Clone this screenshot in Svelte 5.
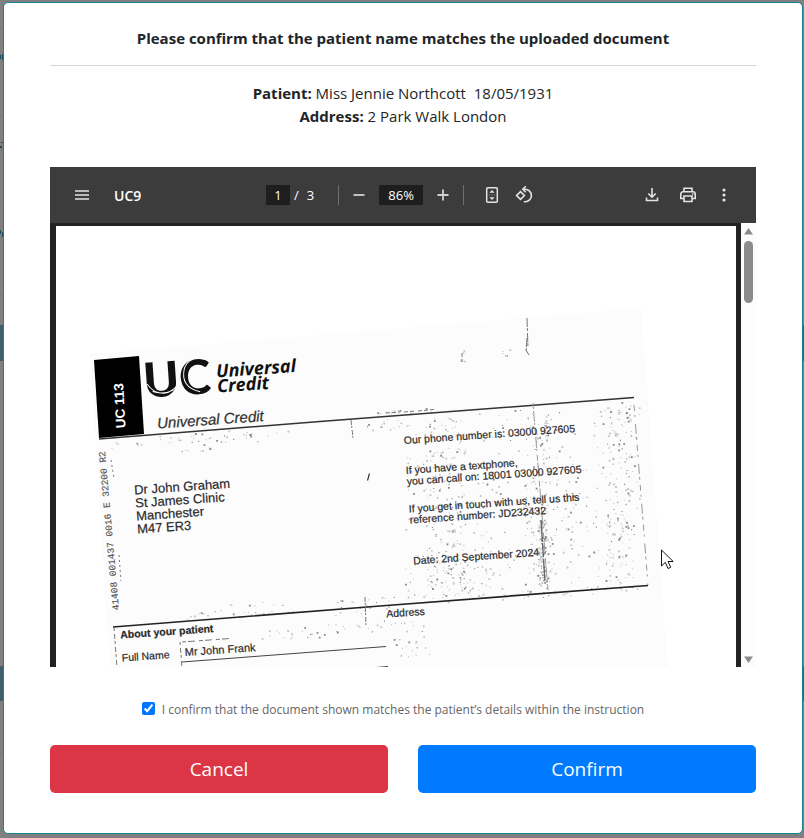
<script>
  let confirmed = $state(true);
  let page = $state('1');
  let zoom = $state('86%');

  // Letter text, in half-pixel document units
  const texts = [
    { x: 269, y: 989, s: 26, t: 'Dr John Graham' },
    { x: 271, y: 1015, s: 26, t: 'St James Clinic' },
    { x: 273, y: 1041, s: 26, t: 'Manchester' },
    { x: 275, y: 1067, s: 26, t: 'M47 ER3' },
    { x: 808, y: 888, s: 21, t: 'Our phone number is: 03000 927605' },
    { x: 812, y: 948, s: 21, t: 'If you have a textphone,' },
    { x: 814, y: 970, s: 21, t: 'you can call on: 18001 03000 927605' },
    { x: 818, y: 1025, s: 21, t: 'If you get in touch with us, tell us this' },
    { x: 820, y: 1047, s: 21, t: 'reference number: JD232432' },
    { x: 827, y: 1129, s: 21, t: 'Date: 2nd September 2024' },
    { x: 773, y: 1235, s: 21, t: 'Address' },
    { x: 241, y: 1277, s: 21, t: 'About your patient', bold: true },
    { x: 244, y: 1323, s: 21, t: 'Full Name' },
    { x: 370, y: 1312, s: 22, t: 'Mr John Frank' }
  ];

  // Repeatable scanner dust: [x, y, width, height, count], following the tilt of the sheet
  let seed = 7;
  const rnd = () => (seed = (seed * 16807) % 2147483647) / 2147483647;
  const areas = [
    [405, 418, 235, 180, 360], [425, 418, 40, 180, 130], [525, 412, 25, 190, 110],
    [605, 404, 28, 190, 120], [430, 565, 60, 38, 60], [365, 418, 40, 14, 14],
    [102, 440, 100, 9, 22], [200, 432, 90, 14, 24], [375, 411, 60, 5, 14],
    [180, 608, 120, 14, 30], [335, 600, 60, 16, 26], [255, 630, 130, 12, 34],
    [390, 622, 40, 36, 26], [500, 593, 140, 8, 26], [538, 520, 8, 68, 90],
    [460, 350, 4, 12, 5], [498, 349, 12, 8, 5], [170, 450, 40, 3, 8]
  ];
  let dust = '';
  let faint = '';
  for (const [x, y, w, h, n] of areas) {
    for (let i = 0; i < n; i++) {
      const px = x + rnd() * w;
      const py = y + rnd() * h - (px - x) * 0.075;
      const r = rnd() < 0.3 ? 1.8 : 1.1;
      const d = `M${px.toFixed(1)} ${py.toFixed(1)}h${r}v${r}h-${r}z`;
      if (i % 3 === 0) dust += d;
      else faint += d;
    }
  }
</script>

<div class="screen">
  <svg class="behind" width="3" height="260" viewBox="0 0 3 260" aria-hidden="true">
    <path d="M0 55h1v4H0zM2 54h1v6H2zM1 142h2v1H1zM0 146h2v2H0zM0 230h1v4H0zM2 232h1v5H2z" fill="#1d4a5c" />
  </svg>
  <div class="modal" role="dialog" aria-labelledby="heading">
    <h1 id="heading">Please confirm that the patient name matches the uploaded document</h1>
    <hr />
    <div class="details">
      <div><b>Patient:</b> Miss Jennie Northcott&nbsp; 18/05/1931</div>
      <div><b>Address:</b> 2 Park Walk London</div>
    </div>

    <section class="viewer" aria-label="Document viewer">
      <div class="toolbar">
        <div class="group">
          <button class="tool" aria-label="Menu">
            <svg width="16" height="16" viewBox="0 0 16 16"><path d="M1 4h14M1 8h14M1 12h14" stroke="#e4e4e4" stroke-width="1.6" /></svg>
          </button>
          <strong>UC9</strong>
        </div>
        <div class="group">
          <input class="page" aria-label="Page" bind:value={page} />
          <span class="slash">/</span><span>3</span>
          <i class="rule first"></i>
          <button class="tool" aria-label="Zoom out">
            <svg width="16" height="16" viewBox="0 0 16 16"><path d="M2.500 8h11" stroke="#d0d0d0" stroke-width="1.8" /></svg>
          </button>
          <input class="zoom" aria-label="Zoom" bind:value={zoom} />
          <button class="tool" aria-label="Zoom in">
            <svg width="16" height="16" viewBox="0 0 16 16"><path d="M2.500 8h11M8 2.500v11" stroke="#d0d0d0" stroke-width="1.8" /></svg>
          </button>
          <i class="rule second"></i>
          <button class="tool" aria-label="Fit to page">
            <svg width="18" height="18" viewBox="0 0 18 18"><rect x="3.7" y="1.7" width="10.6" height="14.6" rx="1" fill="none" stroke="#e4e4e4" stroke-width="1.5" /><path d="M9 4l2.6 2.7H6.400zM9 14l2.600-2.700H6.400z" fill="#e4e4e4" /><path d="M6 9h1M8.500 9h1M11 9h1" stroke="#999" /></svg>
          </button>
          <button class="tool" aria-label="Rotate">
            <svg width="20" height="20" viewBox="0 0 20 20" fill="none" stroke="#e4e4e4" stroke-width="1.6"><path d="M6.500 6.600L10.400 10.500 6.500 14.400 2.600 10.500z" /><path d="M9.500 4.300h1.700a6.200 6.200 0 0 1 0 12.400H9.800" /><path d="M11.800 1.300L8.800 4.300l3 3" /></svg>
          </button>
        </div>
        <div class="group end">
          <button class="tool" aria-label="Download">
            <svg width="16" height="16" viewBox="0 0 16 16" fill="none" stroke="#e4e4e4" stroke-width="1.6"><path d="M8 1v9M4.300 6.500L8 10.200l3.700-3.700M2.500 10.500v3h11v-3" /></svg>
          </button>
          <button class="tool" aria-label="Print">
            <svg width="18" height="18" viewBox="0 0 18 18" fill="none" stroke="#e4e4e4" stroke-width="1.600"><path d="M5 5.500V2.300h8v3.200M4.500 12.500H1.800V8a2.200 2.200 0 0 1 2.200-2.200h10A2.200 2.200 0 0 1 16.200 8v4.500h-2.700M5 10h8v5.500H5z" /><path d="M13 8h1.400" /></svg>
          </button>
          <button class="tool" aria-label="More actions">
            <svg width="16" height="16" viewBox="0 0 16 16" fill="#e4e4e4"><circle cx="8" cy="3" r="1.600" /><circle cx="8" cy="8" r="1.600" /><circle cx="8" cy="13" r="1.600" /></svg>
          </button>
        </div>
      </div>

      <div class="body">
        <div class="sheet">
          <svg class="scan" viewBox="112 452 1360 882" font-family="'Liberation Sans', Arial, sans-serif">
            <g transform="scale(2)">
              <path d="M90 354L641 308 668 668H110z" fill="#fcfcfc" />
              <path d={faint} fill="#c4c4c4" />
              <path d={dust} fill="#888" />
              <path d="M94 360L139 356 144 434 99 438z" fill="#000" />
              <path d="M99 439L320 421.500 634 397.500" stroke="#333" stroke-width="1.500" fill="none" />
              <path d="M113 627L380 606 648 585.500" stroke="#222" stroke-width="1.700" fill="none" />
              <path d="M182 662L386 646.500M370 668L388 666.500" stroke="#444" />
              <g fill="none" stroke="#777">
                <path d="M527 318l1 30M527 338l-1 15" stroke-dasharray="9 1 3 2" />
                <path d="M526 350l3 5M462 353v4m0 2v3" />
                <path d="M533 403L548 590" stroke-dasharray="6 2 11 1 2 4" stroke="#999" />
                <path d="M541 520l4 62" stroke="#666" stroke-width="1.400" stroke-dasharray="22 1 14 2" />
                <path d="M634 405L648 585" stroke-dasharray="6 4 2 7 10 3 3 5" stroke="#999" />
                <path d="M351 420l2 18M365 597l1 30" stroke-dasharray="5 1 2 2" />
                <path d="M114 628l3 40M180 642l2 26" stroke-dasharray="3 3 5 2" />
                <path d="M111 460l3 18M119 555l2 26" stroke-dasharray="2 3" />
                <path d="M182 642l48-3.500" stroke-dasharray="4 2 7 4" />
                <path d="M386 413l14-1M404 412l12-1M418 411l16-1.500" stroke-dasharray="4 2" />
              </g>
              <path d="M367.500 480.500l2-7" stroke="#333" stroke-width="1.200" />
            </g>
            {#each texts as t}
              <text x={t.x} y={t.y} font-size={t.s} font-weight={t.bold ? 700 : 400} fill="#2a2a2a" stroke="#2a2a2a" stroke-width=".4" transform="rotate(-4 {t.x} {t.y})">{t.t}</text>
            {/each}
            <text class="mono" x="238" y="1220" font-size="19" fill="#555" stroke="#555" stroke-width=".3" transform="rotate(-95 238 1220)">41408 001437 0016 E 32200 R2</text>
            <text x="251" y="856" font-size="27" font-weight="700" fill="#fff" transform="rotate(-93 251 856)">UC 113</text>
            <text x="315" y="857" font-size="30" font-style="italic" fill="#333" stroke="#333" stroke-width=".5" transform="rotate(-4 315 857)">Universal Credit</text>
            <g transform="rotate(-4 294 796)">
              <text class="brand" x="289" y="795" font-size="96" fill="#111">UC</text>
              <path d="M296 768q12 20 32 21q20-1 34-21M306 784q21 8 42 0M416 727q-32-10-43 14q-12 38 28 50" fill="none" stroke="#fff" stroke-width="2" />
            </g>
            <g class="slab" font-size="36" font-weight="700" font-style="italic" fill="#111">
              <text x="433" y="755" transform="rotate(-4 433 755)">Universal</text>
              <text x="435" y="785" transform="rotate(-4 435 785)">Credit</text>
            </g>
            <path transform="translate(1323 1100) scale(2)" d="M0 0v16l3.800-3.600 2.700 6.100 2.700-1.200-2.700-5.800h5.200z" fill="#fff" stroke="#111" />
          </svg>
        </div>
        <div class="scrollbar" aria-hidden="true">
          <svg width="9" height="7" viewBox="0 0 9 7"><path d="M4.500 0L9 6.500H0z" fill="#8b8b8b" /></svg>
          <i></i>
          <svg width="9" height="7" viewBox="0 0 9 7"><path d="M4.500 7L0 .5h9z" fill="#8b8b8b" /></svg>
        </div>
      </div>
    </section>

    <label class="confirm">
      <input type="checkbox" bind:checked={confirmed} />
      <span>I confirm that the document shown matches the patient’s details within the instruction</span>
    </label>

    <div class="actions">
      <button class="cancel">Cancel</button>
      <button class="ok">Confirm</button>
    </div>
  </div>
</div>

<style>
  :global(body) { margin: 0; }
  * { box-sizing: border-box; }
  .screen {
    position: relative;
    min-height: 100vh;
    padding: 2px 1px 4px 3px;
    font-family: 'Segoe UI', 'Open Sans', 'Noto Sans', sans-serif;
    font-size: 16px;
    color: #212529;
    background:
      linear-gradient(#3f5f6b, #3f5f6b) 0 325px / 100% 36px no-repeat,
      linear-gradient(#3f5f6b, #3f5f6b) 0 666px / 100% 35px no-repeat,
      linear-gradient(#777, #777) 0 27px / 100% 1px no-repeat,
      linear-gradient(#777, #777) 0 116px / 100% 1px no-repeat,
      linear-gradient(#777, #777) 0 205px / 100% 1px no-repeat,
      linear-gradient(#777, #777) 0 294px / 100% 1px no-repeat,
      linear-gradient(#777, #777) 0 753px / 100% 1px no-repeat,
      #808080;
  }
  .behind { position: absolute; left: 0; top: 0; }
  .modal {
    background: #fff;
    border: 1px solid #138496;
    border-radius: 5px;
    padding: 23px 46px 40px;
  }
  h1 { margin: 0; font-size: 15px; line-height: 24px; font-weight: 700; text-align: center; }
  hr { margin: 15px 0 16px; border: 0; border-top: 1px solid #d5d5d5; }
  .details { text-align: center; font-size: 15px; line-height: 23px; }
  .viewer { margin-top: 39px; }
  .toolbar {
    display: grid;
    grid-template-columns: 1fr auto 1fr;
    align-items: center;
    height: 56px;
    padding: 0 16px;
    background: #3c3c3c;
    color: #fff;
    font-size: 13px;
  }
  .group { display: flex; align-items: center; }
  .end { justify-content: flex-end; gap: 4px; }
  .group strong { margin-left: 16px; font-size: 14px; font-weight: 600; }
  .tool {
    display: flex;
    align-items: center;
    justify-content: center;
    width: 32px;
    height: 32px;
    padding: 0;
    border: 0;
    background: none;
  }
  .toolbar input {
    height: 20px;
    padding: 0;
    border: 0;
    background: #1e1e1e;
    color: #fff;
    font: inherit;
    text-align: center;
  }
  .page { width: 24px; }
  .toolbar .zoom { width: 44px; margin: 0 4px; }
  .slash { margin: 0 8px 0 4px; }
  .rule { width: 1px; height: 20px; background: #707070; }
  .first { margin: 0 4px 0 24px; }
  .second { margin: 0 12px 0 4px; }
  .body { display: flex; height: 444px; background: #222; }
  .sheet { flex: 1; padding: 3px 5px 0 6px; overflow: hidden; }
  .scan { display: block; width: 100%; background: #fff; }
  .mono { font-family: 'Liberation Mono', monospace; }
  .brand { font-family: Lato, sans-serif; font-weight: 900; }
  .slab { font-family: 'Open Sans', sans-serif; }
  .scrollbar {
    display: flex;
    flex-direction: column;
    align-items: center;
    width: 15px;
    padding: 5px 0 4px;
    background: #fcfcfc;
  }
  .scrollbar i { width: 9px; height: 62px; margin: 6px 0 auto; border-radius: 5px; background: #8b8b8b; }
  .confirm {
    display: flex;
    justify-content: center;
    align-items: center;
    gap: 7px;
    margin-top: 32px;
    padding-right: 20px;
    font-size: 12px;
    line-height: 21px;
    color: #666;
  }
  .confirm input { width: 13px; height: 13px; margin: 0 0 3px; accent-color: #0075ff; }
  .actions { display: grid; grid-template-columns: 1fr 1fr; gap: 30px; margin-top: 25px; }
  .actions button {
    height: 48px;
    border: 0;
    border-radius: 5px;
    color: #fff;
    font-family: inherit;
    font-size: 19px;
  }
  .cancel { background: #dc3545; }
  .ok { background: #007bff; }
</style>
